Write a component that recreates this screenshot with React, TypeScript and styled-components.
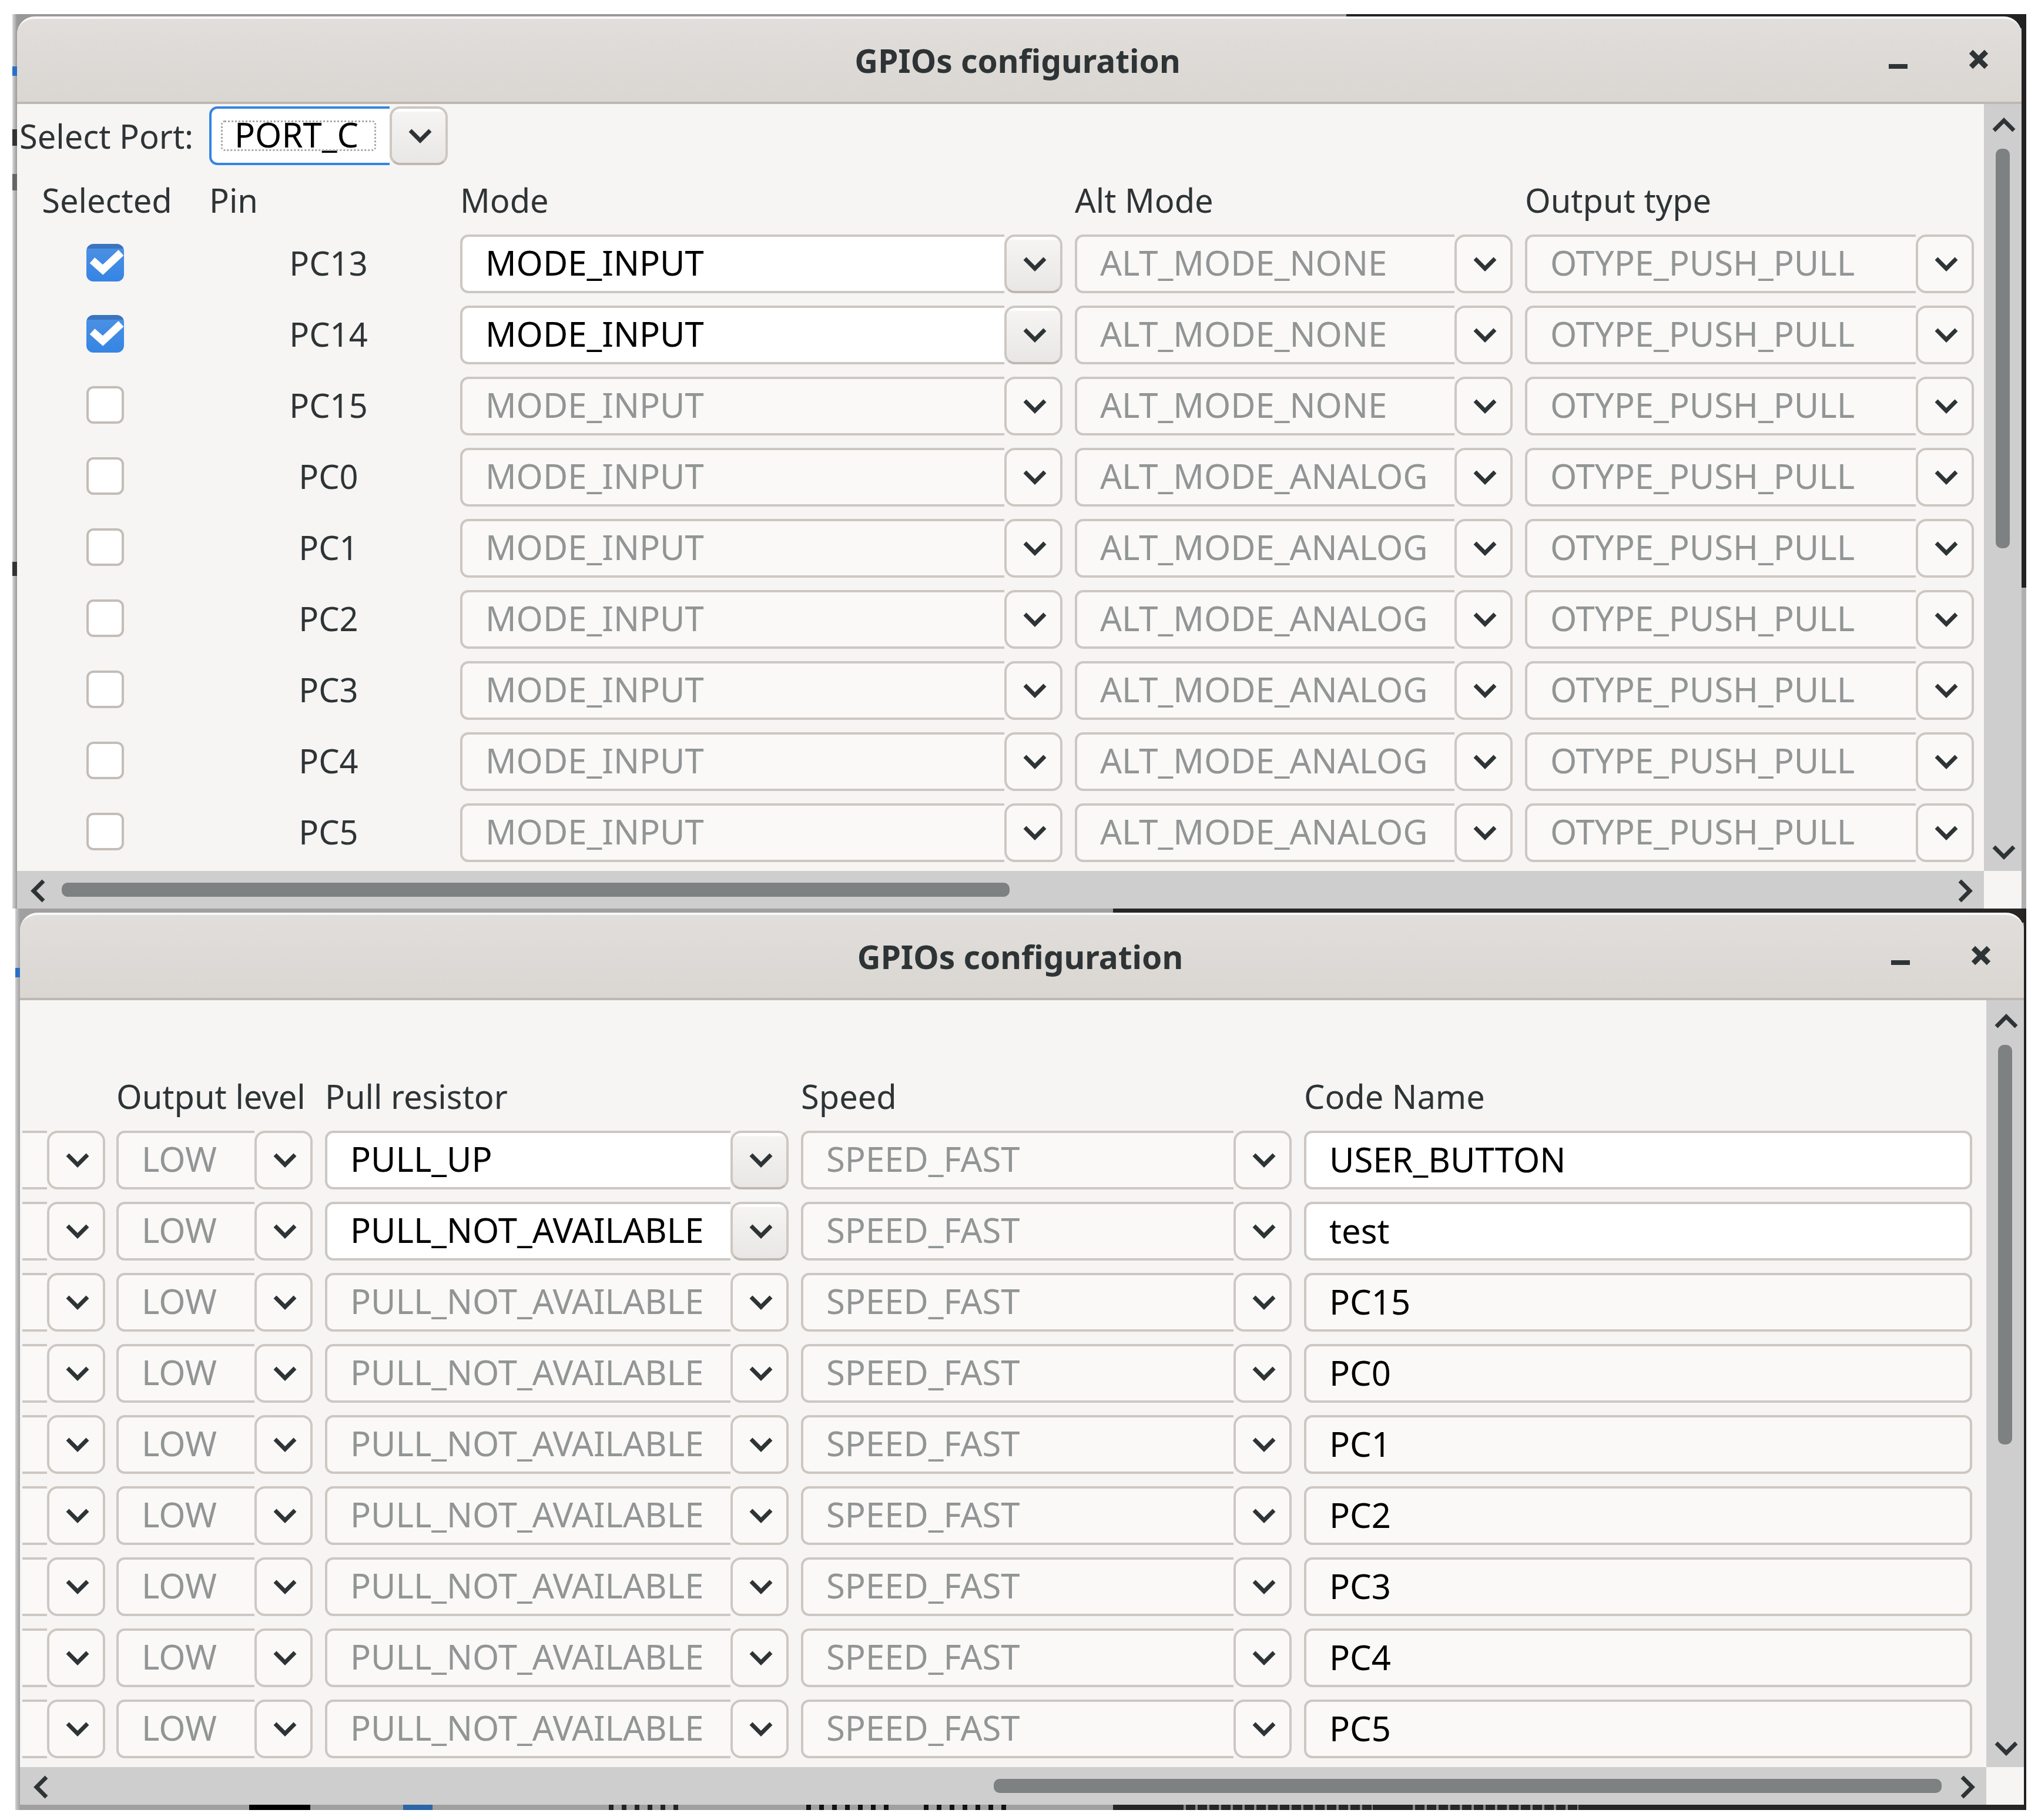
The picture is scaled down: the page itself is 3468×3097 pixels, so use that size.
import React, { useId } from "react";
import styled, { createGlobalStyle, css } from "styled-components";

const Global = createGlobalStyle`
  * { box-sizing: border-box; }
  body {
    margin: 0;
    background: #fff;
    color: #2e3436;
    font-family: "Noto Sans", "Open Sans", sans-serif;
    font-size: 56px;
    line-height: 76px;
  }
`;

const Page = styled.main`
  display: flex;
  flex-direction: column;
  padding: 24px 20px 16px 21px;
`;

const desktopTop = css`
  margin: 0;
  padding: 4px 8px 0;
  background:
    linear-gradient(#222, #222) right top / 8px 976px no-repeat,
    linear-gradient(#222, #222) right top / 1157px 24px no-repeat,
    linear-gradient(#2a6fc4, #2a6fc4) left 89px / 8px 16px no-repeat,
    linear-gradient(#333, #333) left 196px / 8px 28px no-repeat,
    linear-gradient(#666, #666) left 272px / 8px 28px no-repeat,
    linear-gradient(#333, #333) left 932px / 8px 24px no-repeat,
    linear-gradient(#9a9996, #9a9996) 24px top / 100% 4px no-repeat,
    linear-gradient(90deg, #d8d8d8, #b8b8b8 4px, #989898 8px, #b0b0b0);
`;

const desktopBottom = css`
  margin-left: 5px;
  padding: 7px 4px 9px 8px;
  background:
    linear-gradient(#222, #222) right top / 4px 100% no-repeat,
    linear-gradient(#262626, #262626) right top / 1554px 24px no-repeat,
    repeating-linear-gradient(90deg, #262626 0 8px, #8a8a8a 8px 12px, #262626 12px 20px) 1980px bottom / 330px 9px no-repeat,
    repeating-linear-gradient(90deg, #262626 0 8px, #8a8a8a 8px 12px, #262626 12px 20px) 2370px bottom / 290px 9px no-repeat,
    linear-gradient(#262626, #262626) right bottom / 1554px 9px no-repeat,
    linear-gradient(#000, #000) 398px bottom / 104px 9px no-repeat,
    linear-gradient(#2c65a8, #2c65a8) 660px bottom / 50px 9px no-repeat,
    repeating-linear-gradient(90deg, #222 0 8px, #a0a0a0 8px 22px) 1010px bottom / 120px 9px no-repeat,
    repeating-linear-gradient(90deg, #111 0 8px, #a0a0a0 8px 22px) 1346px bottom / 150px 9px no-repeat,
    repeating-linear-gradient(90deg, #111 0 8px, #a0a0a0 8px 22px) 1546px bottom / 150px 9px no-repeat,
    linear-gradient(#2a6fc4, #2a6fc4) left 101px / 8px 16px no-repeat,
    linear-gradient(90deg, #d0d0d0, #a0a0a0 8px, #a0a0a0);
`;

const Backdrop = styled.div<{ $place: "top" | "bottom" }>`
  ${(p) => (p.$place === "top" ? desktopTop : desktopBottom)}
`;

const Frame = styled.section`
  display: flex;
  flex-direction: column;
`;

const TitleBar = styled.header`
  display: grid;
  grid-template-columns: 1fr auto 1fr;
  align-items: center;
  height: 149px;
  padding: 0 47px 0 41px;
  border-top: 4px solid #f9f8f8;
  border-bottom: 4px solid #bfb8b1;
  border-radius: 30px 30px 0 0;
  background: linear-gradient(#e1dedb, #dad6d2);
`;

const Title = styled.h1`
  grid-column: 2;
  margin: 0;
  font-size: 55px;
  line-height: 76px;
  font-weight: 700;
`;

const WindowButtons = styled.div`
  display: flex;
  justify-content: flex-end;
  gap: 85px;
`;

const IconButton = styled.button`
  display: grid;
  place-items: center;
  width: 52px;
  height: 52px;
  padding: 0;
  border: 0;
  background: none;
  color: #2e3436;
`;

const Viewport = styled.div`
  display: grid;
  grid-template-columns: minmax(0, 1fr) 64px;
  background: #f6f5f4;
`;

const Content = styled.div<{ $inset: string }>`
  display: flex;
  flex-direction: column;
  gap: 21px;
  padding: ${(p) => p.$inset};
`;

const PortRow = styled.div`
  display: flex;
  align-items: center;
  gap: 21px;
  height: 100px;
`;

const PortLabel = styled.label`
  width: 306px;
  padding-left: 4px;
  white-space: nowrap;
`;

const PortField = styled.div`
  width: 406px;
`;

const Table = styled.table<{ $columns: string }>`
  display: grid;
  grid-template-columns: ${(p) => p.$columns};
  gap: 21px;
`;

const Head = styled.thead`
  display: contents;
`;
const Body = styled.tbody`
  display: contents;
`;
const Row = styled.tr`
  display: contents;
`;

const HeadCell = styled.th<{ $center?: boolean }>`
  padding: 0;
  font-weight: 400;
  white-space: nowrap;
  height: 76px;
  text-align: ${(p) => (p.$center ? "center" : "left")};
`;

const Cell = styled.td`
  display: grid;
  align-items: center;
  height: 100px;
  padding: 0;
`;

const PinCell = styled.th`
  padding: 0;
  font-weight: 400;
  line-height: 96px;
  text-align: center;
`;

const Tick = styled.input`
  appearance: none;
  justify-self: center;
  width: 64px;
  height: 64px;
  margin: 0 6px 4px 0;
  border: 4px solid #c4bdb7;
  border-radius: 12px;
  background: #fff;
  &:checked {
    border: 0;
    background: linear-gradient(#3b74bf 0 8px, #4a90e4 8px, #3584e4);
  }
`;

const TickCell = styled(Cell)`
  & > * {
    grid-area: 1 / 1;
  }
  & > svg {
    justify-self: center;
    margin: 0 6px 4px 0;
    pointer-events: none;
  }
`;

const field = css`
  width: 100%;
  height: 100px;
  margin: 0;
  border: 4px solid #cdc7c2;
  border-radius: 14px;
  font: inherit;
  font-size: 58px;
  opacity: 1;
`;

const ComboBox = styled.div`
  display: grid;
  width: 100%;
  & > * {
    grid-area: 1 / 1;
  }
`;

const Select = styled.select<{ $clipped?: boolean; $active?: boolean }>`
  ${field}
  appearance: none;
  padding: 0 98px 4px 39px;
  background: #fff;
  color: #000;
  &:disabled {
    background: #faf9f8;
    color: #929595;
  }
  ${(p) => p.$active && "border-color: #3584e4;"}
  ${(p) => p.$clipped && "border-left: 0; border-radius: 0 14px 14px 0;"}
`;

const FocusMark = styled.span`
  align-self: center;
  width: 264px;
  height: 52px;
  margin-left: 20px;
  border: 3px dotted #a8a8a8;
  border-radius: 6px;
  pointer-events: none;
`;

const ArrowSlot = styled.span`
  justify-self: end;
  width: 99px;
  height: 100px;
  background: #f6f5f4;
  pointer-events: none;
`;

const Arrow = styled.span<{ $disabled?: boolean }>`
  display: grid;
  place-items: center;
  height: 100%;
  padding-left: 4px;
  border: 4px solid #cdc7c2;
  border-bottom-color: ${(p) => (p.$disabled ? "#cdc7c2" : "#bfb8b1")};
  border-radius: 18px;
  background: ${(p) => (p.$disabled ? "#faf9f8" : "linear-gradient(#fff 0 4px, #f5f4f3 6px, #e9e7e5)")};
`;

const TextBox = styled.input`
  ${field}
  padding: 0 39px 4px;
  background: #fff;
  color: #000;
  &:disabled {
    background: #faf9f8;
    color: #000;
  }
`;

const VBar = styled.div`
  display: flex;
  flex-direction: column;
  align-items: center;
  background: #cecece;
`;

const HBar = styled.div`
  display: flex;
  align-items: center;
  height: 64px;
  background: #cecece;
`;

const stepperSize = {
  up: "width: 64px; height: 76px; padding: 0 0 4px 4px;",
  down: "width: 64px; height: 76px; padding: 12px 0 0 4px;",
  left: "width: 76px; height: 64px; padding: 4px 4px 0 0;",
  right: "width: 76px; height: 64px; padding: 4px 0 0 12px;",
};

const ScrollButton = styled(IconButton)<{ $to: keyof typeof stepperSize }>`
  flex: none;
  ${(p) => stepperSize[p.$to]}
`;

const Thumb = styled.div`
  border-radius: 10px;
  background: #7e8182;
`;

const VTrack = styled.div`
  display: grid;
  flex: 1;
  grid-template: 59fr 41fr / 24px;
`;

const HTrack = styled.div<{ $end?: boolean }>`
  display: grid;
  flex: 1;
  grid-template: 24px / ${(p) => (p.$end ? "99fr 101fr" : "101fr 99fr")};
  & > ${Thumb} {
    grid-column: ${(p) => (p.$end ? 2 : 1)};
  }
`;

const turns = { down: 0, left: 90, up: 180, right: 270 };

function Chevron({ to = "down" }: { to?: keyof typeof turns }) {
  return (
    <svg width="40" height="40" viewBox="0 0 40 40" aria-hidden="true">
      <path
        d="M3 11 L20 28 L37 11"
        transform={`rotate(${turns[to]} 20 20)`}
        fill="none"
        stroke="#2e3436"
        strokeWidth="7"
      />
    </svg>
  );
}

interface ComboProps {
  name: string;
  value: string;
  id?: string;
  disabled?: boolean;
  clipped?: boolean;
  active?: boolean;
}

function Combo({ name, value, id, disabled, clipped, active }: ComboProps) {
  return (
    <ComboBox>
      <Select id={id} aria-label={id ? undefined : name} disabled={disabled} $clipped={clipped} $active={active}>
        <option>{value}</option>
      </Select>
      {active && <FocusMark />}
      <ArrowSlot>
        <Arrow $disabled={disabled}>
          <Chevron />
        </Arrow>
      </ArrowSlot>
    </ComboBox>
  );
}

interface WindowProps {
  inset: string;
  scrolledEnd?: boolean;
  children: React.ReactNode;
}

function ConfigWindow({ inset, scrolledEnd, children }: WindowProps) {
  return (
    <Frame>
      <TitleBar>
        <Title>GPIOs configuration</Title>
        <WindowButtons>
          <IconButton aria-label="Minimize">
            <svg width="40" height="40" viewBox="0 0 40 40">
              <path d="M4 26h32v8H4z" fill="#2e3436" />
            </svg>
          </IconButton>
          <IconButton aria-label="Close">
            <svg width="40" height="40" viewBox="0 0 40 40">
              <path d="M7 5 L33 31 M33 5 L7 31" stroke="#2e3436" strokeWidth="9" />
            </svg>
          </IconButton>
        </WindowButtons>
      </TitleBar>
      <Viewport>
        <Content $inset={inset}>{children}</Content>
        <VBar>
          <ScrollButton $to="up" aria-label="Scroll up">
            <Chevron to="up" />
          </ScrollButton>
          <VTrack>
            <Thumb />
          </VTrack>
          <ScrollButton $to="down" aria-label="Scroll down">
            <Chevron />
          </ScrollButton>
        </VBar>
        <HBar>
          <ScrollButton $to="left" aria-label="Scroll left">
            <Chevron to="left" />
          </ScrollButton>
          <HTrack $end={scrolledEnd}>
            <Thumb />
          </HTrack>
          <ScrollButton $to="right" aria-label="Scroll right">
            <Chevron to="right" />
          </ScrollButton>
        </HBar>
      </Viewport>
    </Frame>
  );
}

const pins = [
  { pin: "PC13", on: true, alt: "ALT_MODE_NONE", pull: "PULL_UP", code: "USER_BUTTON" },
  { pin: "PC14", on: true, alt: "ALT_MODE_NONE", pull: "PULL_NOT_AVAILABLE", code: "test" },
  { pin: "PC15", on: false, alt: "ALT_MODE_NONE", pull: "PULL_NOT_AVAILABLE", code: "PC15" },
  ...[0, 1, 2, 3, 4, 5].map((n) => ({
    pin: `PC${n}`,
    on: false,
    alt: "ALT_MODE_ANALOG",
    pull: "PULL_NOT_AVAILABLE",
    code: `PC${n}`,
  })),
];

export default function App() {
  const portId = useId();
  return (
    <Page>
      <Global />
      <Backdrop $place="top">
        <ConfigWindow inset="4px 17px 15px 0">
          <PortRow>
            <PortLabel htmlFor={portId}>Select Port:</PortLabel>
            <PortField>
              <Combo id={portId} name="Port" value="PORT_C" active />
            </PortField>
          </PortRow>
          <Table $columns="306px 406px 1025fr 745fr 764fr">
            <Head>
              <Row>
                <HeadCell $center>Selected</HeadCell>
                <HeadCell>Pin</HeadCell>
                <HeadCell>Mode</HeadCell>
                <HeadCell>Alt Mode</HeadCell>
                <HeadCell>Output type</HeadCell>
              </Row>
            </Head>
            <Body>
              {pins.map((p) => (
                <Row key={p.pin}>
                  <TickCell>
                    <Tick type="checkbox" defaultChecked={p.on} aria-label={`Select ${p.pin}`} />
                    {p.on && (
                      <svg width="64" height="64" viewBox="0 0 64 64" aria-hidden="true">
                        <path d="M10 28 L28 44 L59 15" fill="none" stroke="#fff" strokeWidth="13" />
                      </svg>
                    )}
                  </TickCell>
                  <PinCell scope="row">{p.pin}</PinCell>
                  <Cell>
                    <Combo name={`${p.pin} mode`} value="MODE_INPUT" disabled={!p.on} />
                  </Cell>
                  <Cell>
                    <Combo name={`${p.pin} alt mode`} value={p.alt} disabled />
                  </Cell>
                  <Cell>
                    <Combo name={`${p.pin} output type`} value="OTYPE_PUSH_PULL" disabled />
                  </Cell>
                </Row>
              ))}
            </Body>
          </Table>
        </ConfigWindow>
      </Backdrop>
      <Backdrop $place="bottom">
        <ConfigWindow inset="4px 24px 15px 4px" scrolledEnd>
          <PortRow />
          <Table $columns="139px 334px 789fr 835fr 1137fr">
            <Head>
              <Row>
                <HeadCell />
                <HeadCell>Output level</HeadCell>
                <HeadCell>Pull resistor</HeadCell>
                <HeadCell>Speed</HeadCell>
                <HeadCell>Code Name</HeadCell>
              </Row>
            </Head>
            <Body>
              {pins.map((p) => (
                <Row key={p.pin}>
                  <Cell>
                    <Combo name={`${p.pin} output type`} value="" disabled clipped />
                  </Cell>
                  <Cell>
                    <Combo name={`${p.pin} output level`} value="LOW" disabled />
                  </Cell>
                  <Cell>
                    <Combo name={`${p.pin} pull resistor`} value={p.pull} disabled={!p.on} />
                  </Cell>
                  <Cell>
                    <Combo name={`${p.pin} speed`} value="SPEED_FAST" disabled />
                  </Cell>
                  <Cell>
                    <TextBox aria-label={`${p.pin} code name`} defaultValue={p.code} disabled={!p.on} />
                  </Cell>
                </Row>
              ))}
            </Body>
          </Table>
        </ConfigWindow>
      </Backdrop>
    </Page>
  );
}
